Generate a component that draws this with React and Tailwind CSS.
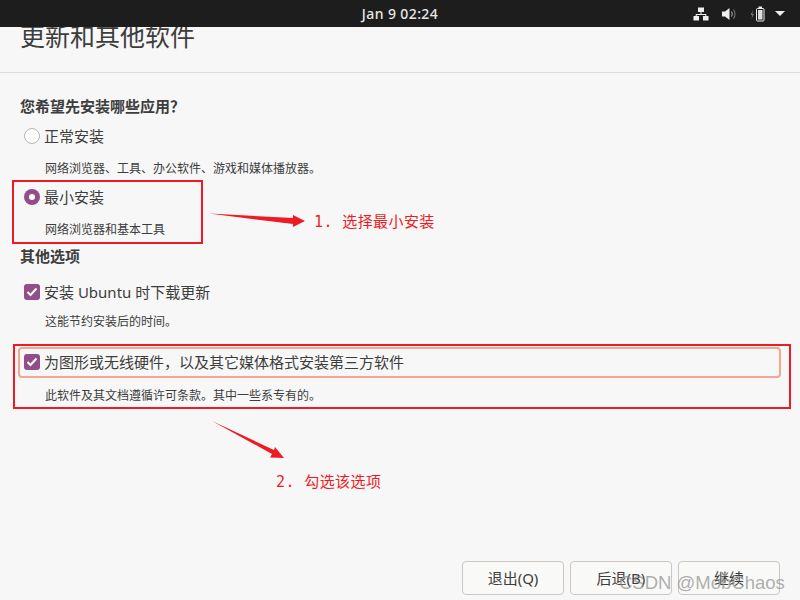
import React from "react";

const cjk = "font-['Noto_Sans','Noto_Sans_CJK_SC',sans-serif]";

const TopBar = () => (
  <div className="relative z-10 flex h-[27px] shrink-0 items-center justify-center bg-[#1d1d1d]">
    <span className="text-[14px] font-medium tracking-[0.4px] text-[#e8e8e8] whitespace-pre">Jan 9 02:24</span>
    <div className="absolute right-[15px] top-0 flex h-[27px] items-center">
      <svg width="16" height="14" viewBox="0 0 16 14" className="mr-[13px]" fill="#eee">
        <rect x="5" y="0.5" width="6" height="4.5" />
        <rect x="0.5" y="9" width="5.5" height="4.5" />
        <rect x="10" y="9" width="5.5" height="4.5" />
        <path d="M7.5 5h1v2h4.8v2h-1V8H3.7v1h-1V7h4.8z" />
      </svg>
      <svg width="15" height="14" viewBox="0 0 15 14" className="mr-[13px]">
        <path d="M0 4.500h3L7.500 1v12L3 9.500H0z" fill="#eee" />
        <path d="M9.500 4.500c1 1.500 1 3.500 0 5" stroke="#aaa" strokeWidth="1.100" fill="none" />
        <path d="M11.500 2.500c2 2.500 2 6.500 0 9" stroke="#777" strokeWidth="1.100" fill="none" />
      </svg>
      <svg width="15" height="16" viewBox="0 0 15 16" className="mr-[10px]">
        <path d="M3 4 0.500 9h1.800L1.500 13 4 8H2.300z" fill="#777" />
        <rect x="6.500" y="2.500" width="7.500" height="12.500" rx="1" fill="none" stroke="#eee" />
        <rect x="8.500" y="0.500" width="3.500" height="2" fill="#eee" />
        <rect x="8" y="4" width="4.500" height="9.500" fill="#ddd" />
      </svg>
      <svg width="10" height="5" viewBox="0 0 10 5">
        <path d="M0 0h10L5 5z" fill="#eee" />
      </svg>
    </div>
  </div>
);

const Radio = ({ checked }) =>
  checked ? (
    <span className="flex h-[16px] w-[16px] shrink-0 items-center justify-center rounded-full bg-[#924d8b]">
      <span className="h-[6px] w-[6px] rounded-full bg-white" />
    </span>
  ) : (
    <span className="h-[16px] w-[16px] shrink-0 rounded-full border border-[#b6b6b3] bg-white" />
  );

const Check = () => (
  <span className="flex h-[16px] w-[16px] shrink-0 items-center justify-center rounded-[3px] bg-[#924d8b]">
    <svg width="12" height="10" viewBox="0 0 12 10">
      <path d="M1.500 5 4.500 8 10.500 1.500" stroke="#fff" strokeWidth="2" fill="none" />
    </svg>
  </span>
);

const Option = ({ control, label, desc, labelClass, descClass }) => (
  <div>
    <div className={`flex items-center gap-[4px] pl-[4px] text-[15px] leading-[20px] text-[#3d3d3d] ${labelClass}`}>
      {control}
      <span>{label}</span>
    </div>
    <div className={`pl-[25px] text-[12px] leading-[16px] text-[#3d3d3d] ${descClass}`}>{desc}</div>
  </div>
);

const Btn = ({ children }) => (
  <button className="h-[34px] w-[102px] rounded-[4px] border border-[#cdc7c2] bg-[#f9f9f8] text-[15px] text-[#3d3d3d]">
    {children}
  </button>
);

const Annotations = () => (
  <>
    <div className="absolute left-[12px] top-[180px] h-[64px] w-[191px] border-2 border-[#ed1c24]" />
    <div className="absolute left-[13px] top-[344px] h-[65px] w-[778px] border-2 border-[#ed1c24]" />
    <svg className="absolute left-0 top-0" width="800" height="600" viewBox="0 0 800 600">
      <path d="M209 213.500 293 218 293 215 305 221 293 227 293 224z" fill="#ed1c24" />
      <path d="M212 421 274 450 275 447 284 458 270 457.500 272 454z" fill="#ed1c24" />
    </svg>
    <div className="absolute left-[314px] top-[212px] font-['DejaVu_Sans_Mono','Noto_Sans_CJK_SC',monospace] text-[15px] leading-[20px] tracking-[0.4px] text-[#ed1c24] whitespace-pre">
      1. 选择最小安装
    </div>
    <div className="absolute left-[276px] top-[472px] font-['DejaVu_Sans_Mono','Noto_Sans_CJK_SC',monospace] text-[15px] leading-[20px] tracking-[0.4px] text-[#ed1c24] whitespace-pre">
      2. 勾选该选项
    </div>
    <div className="absolute left-[619px] top-[570px] font-['Liberation_Sans',sans-serif] text-[18.500px] leading-[26px] text-[#8c8c8c]/70 whitespace-pre">
      CSDN @MobChaos
    </div>
  </>
);

export default function App() {
  return (
    <div className={`relative flex h-[600px] w-[800px] flex-col overflow-hidden bg-[#f7f7f7] ${cjk}`}>
      <TopBar />
      <div className="flex h-[46px] shrink-0 items-end overflow-hidden border-b border-[#dcdcdc] pb-[19px] pl-[20px] text-[25px] leading-[34px] text-[#3d3d3d]">
        更新和其他软件
      </div>
      <div className="flex flex-1 flex-col pl-[20px]">
        <div className="mt-[23px] text-[15px] font-bold leading-[20px] text-[#3d3d3d]">您希望先安装哪些应用？</div>
        <Option
          control={<Radio />}
          label="正常安装"
          desc="网络浏览器、工具、办公软件、游戏和媒体播放器。"
          labelClass="mt-[10px]"
          descClass="mt-[15px]"
        />
        <Option
          control={<Radio checked />}
          label="最小安装"
          desc="网络浏览器和基本工具"
          labelClass="mt-[10px]"
          descClass="mt-[15px]"
        />
        <div className="mt-[8px] text-[15px] font-bold leading-[20px] text-[#3d3d3d]">其他选项</div>
        <Option
          control={<Check />}
          label="安装 Ubuntu 时下载更新"
          desc="这能节约安装后的时间。"
          labelClass="mt-[16px]"
          descClass="mt-[12px]"
        />
        <div className="relative mt-[18px]">
          <div className="absolute left-[-2px] top-[-1px] h-[31px] w-[763px] rounded-[4px] border-2 border-[#f3a78e]" />
          <Option
            control={<Check />}
            label="为图形或无线硬件，以及其它媒体格式安装第三方软件"
            desc="此软件及其文档遵循许可条款。其中一些系专有的。"
            labelClass="mt-[4px]"
            descClass="mt-[16px]"
          />
        </div>
        <div className="mt-auto mb-[5px] mr-[20px] flex justify-end gap-[6px]">
          <Btn>退出(Q)</Btn>
          <Btn>后退(B)</Btn>
          <Btn>继续</Btn>
        </div>
      </div>
      <Annotations />
    </div>
  );
}
